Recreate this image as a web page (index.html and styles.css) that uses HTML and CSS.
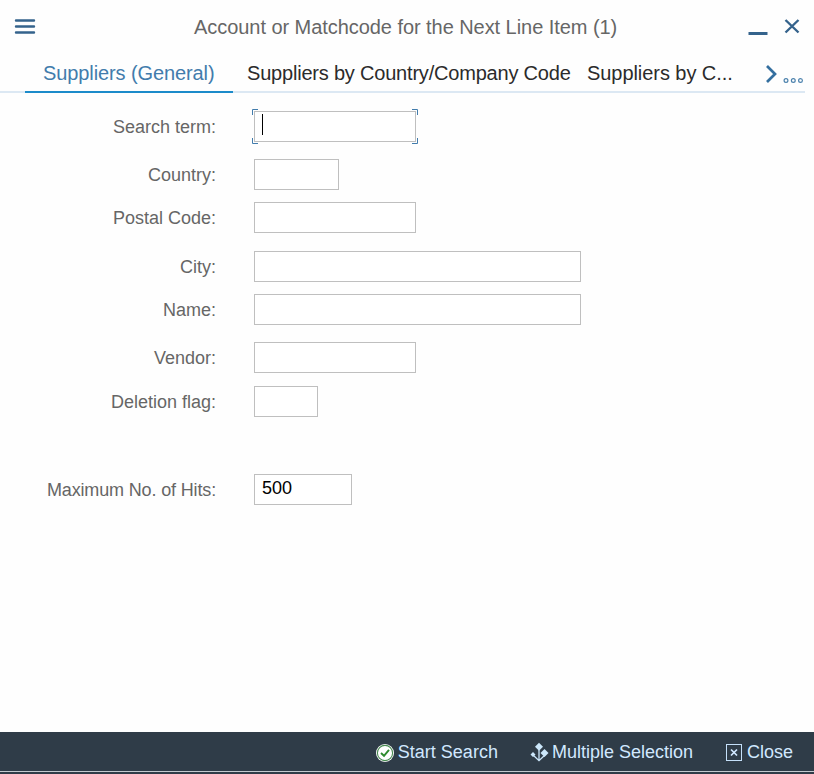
FILE: index.html
```html
<!DOCTYPE html>
<html lang="en">
<head>
<meta charset="utf-8">
<title>Account or Matchcode for the Next Line Item (1)</title>
<link rel="stylesheet" href="styles.css">
</head>
<body>
<div class="dialog">
  <header class="titlebar">
    <svg class="menu-icon" width="22" height="18" viewBox="0 0 22 18"><path d="M2 2.5H20M2 8.5H20M2 14.5H20" fill="none" stroke="#35638c" stroke-width="2.4" stroke-linecap="round"/></svg>
    <h1 class="title">Account or Matchcode for the Next Line Item (1)</h1>
    <div class="window-actions">
      <svg width="20" height="20" viewBox="0 0 20 20"><path d="M.5 14.5H19.5" fill="none" stroke="#35638c" stroke-width="3"/></svg>
      <svg width="16" height="16" viewBox="0 0 16 16"><path d="M1.5 1L14.5 13.5M14.5 1L1.5 13.5" fill="none" stroke="#35638c" stroke-width="2.4"/></svg>
    </div>
  </header>
  <nav class="tabs">
    <span class="tab tab-active">Suppliers (General)</span>
    <span class="tab tab-country">Suppliers by Country/Company Code</span>
    <span class="tab tab-last">Suppliers by C...</span>
    <svg class="more-icon" width="40" height="24" viewBox="0 0 40 24"><path d="M2 5L10 13L2 21" fill="none" stroke="#346f9f" stroke-width="2.7"/><g fill="none" stroke="#4c82ad" stroke-width="1.2"><circle cx="21" cy="19.5" r="1.9"/><circle cx="28.3" cy="19.5" r="1.9"/><circle cx="35.5" cy="19.5" r="1.9"/></g></svg>
  </nav>
  <main class="form">
    <div class="row"><span class="label">Search term:</span><div class="field medium focused"><i class="caret"></i><svg class="corners" width="166" height="35" viewBox="0 0 166 35"><path d="M.5 6V.5H6M160 .5H165.5V6M165.5 29V34.5H160M6 34.5H.5V29" fill="none" stroke="#427cac"/></svg></div></div>
    <div class="row gap-large"><span class="label">Country:</span><div class="field country"></div></div>
    <div class="row gap-small"><span class="label">Postal Code:</span><div class="field medium"></div></div>
    <div class="row gap-group"><span class="label">City:</span><div class="field wide"></div></div>
    <div class="row gap-small"><span class="label">Name:</span><div class="field wide"></div></div>
    <div class="row gap-large"><span class="label">Vendor:</span><div class="field medium"></div></div>
    <div class="row gap-flag"><span class="label">Deletion flag:</span><div class="field flag"></div></div>
    <div class="row gap-section"><span class="label label-hits">Maximum No. of Hits:</span><div class="field hits">500</div></div>
  </main>
  <footer class="footer">
    <span class="action"><svg width="20" height="20" viewBox="0 0 20 20"><circle cx="10" cy="11" r="9" fill="#fff"/><circle cx="10" cy="11" r="7.6" fill="#fff" stroke="#488b52" stroke-width="1.1"/><path d="M6 11L9 13.8L14 7.8" fill="none" stroke="#2e8b2e" stroke-width="1.9"/></svg>Start Search</span>
    <span class="action multiple"><svg width="20" height="20" viewBox="0 0 20 20"><path d="M10 .8L14 4.8L10 8.8L6 4.8ZM15.5 7L19.5 11L15.5 15L11.5 11ZM4 10L6.5 12.5L4 15L1.5 12.5Z" fill="#cce7fb"/><path d="M10 6V19M4 13L10 18.7L16 13" fill="none" stroke="#cce7fb" stroke-width="1.3"/></svg>Multiple Selection</span>
    <span class="action close"><svg width="18" height="18" viewBox="0 0 18 18"><rect x="1.5" y="1.5" width="15" height="16" fill="none" stroke="#c5e0fa"/><path d="M6 6.5L12 12.5M12 6.5L6 12.5" fill="none" stroke="#d1e8ff" stroke-width="1.7"/></svg>Close</span>
  </footer>
</div>
</body>
</html>
```
FILE: styles.css
```css
* { box-sizing: border-box; }
body {
  margin: 0;
  background: #fefefe;
  font-family: "Liberation Sans", Arial, sans-serif;
  font-size: 18px;
  color: #666;
}
.dialog {
  display: flex;
  flex-direction: column;
  width: 814px;
  height: 774px;
  overflow: hidden;
}
.titlebar {
  display: flex;
  align-items: center;
  height: 54px;
  padding: 0 14px;
}
.menu-icon { margin-right: 158px; }
.title {
  flex: 1;
  margin: 0;
  font-size: 20px;
  font-weight: 400;
  line-height: 24px;
  letter-spacing: -0.055px;
  white-space: nowrap;
}
.window-actions {
  display: flex;
  align-items: center;
  gap: 16px;
}
.window-actions svg:first-child { margin-top: 3px; }
.tabs {
  display: flex;
  width: 805px;
  height: 39px;
  padding-left: 25px;
  border-bottom: 2px solid #dce8f3;
  font-size: 20px;
  line-height: 38px;
  color: #2b2b2b;
  white-space: nowrap;
}
.tab { height: 39px; }
.tab-active {
  width: 208px;
  margin-right: 14px;
  padding-left: 18px;
  border-bottom: 2px solid #1c8bca;
  color: #427cac;
  letter-spacing: -0.1px;
}
.tab-country {
  width: 340px;
  letter-spacing: -0.2px;
}
.tab-last { letter-spacing: -0.06px; }
.more-icon { margin: 7px 0 0 auto; }
.form { flex: 1; padding-top: 18px; }
.row { display: flex; align-items: center; height: 31px; }
.label {
  width: 216px;
  margin-right: 38px;
  padding-top: 1px;
  line-height: 32px;
  text-align: right;
  white-space: nowrap;
}
.label-hits { letter-spacing: -0.15px; }
.field {
  height: 31px;
  padding-left: 7px;
  border: 1px solid #bfbfbf;
  background: #fff;
  color: #000;
  line-height: 27px;
}
.medium { width: 162px; }
.wide { width: 327px; }
.country { width: 85px; }
.flag { width: 64px; }
.hits { width: 98px; }
.gap-small { margin-top: 12px; }
.gap-flag { margin-top: 13px; }
.gap-large { margin-top: 17px; }
.gap-group { margin-top: 18px; }
.gap-section { margin-top: 57px; }
.focused { position: relative; }
.caret {
  display: block;
  width: 1px;
  height: 21px;
  margin-top: 2px;
  background: #000;
}
.corners { position: absolute; left: -3px; top: -3px; }
.footer {
  display: flex;
  align-items: center;
  justify-content: flex-end;
  height: 42px;
  padding: 0 21px 2px 0;
  background: linear-gradient(#c2c9cf, #c2c9cf) 0 39px / 100% 1px no-repeat #2f3c48;
  color: #d1e8ff;
}
.action { display: flex; align-items: center; gap: 3px; white-space: nowrap; }
.multiple { margin-left: 31px; }
.close { margin-left: 32px; gap: 4px; }
```
